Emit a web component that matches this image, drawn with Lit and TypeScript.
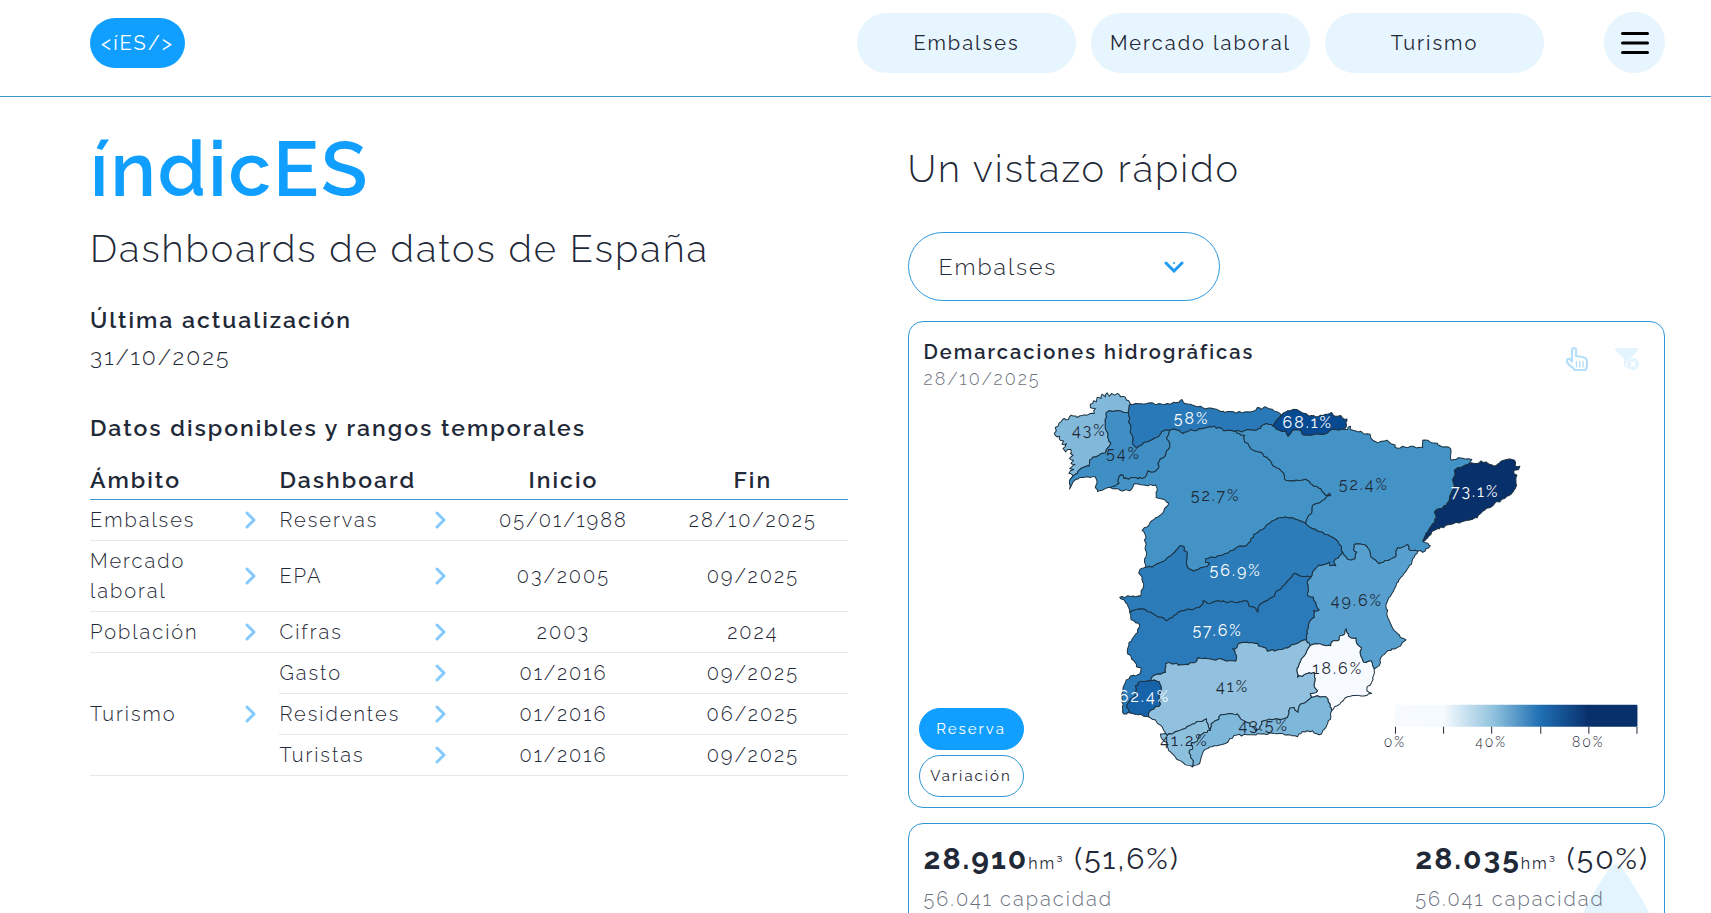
import { LitElement, html, svg, css } from "lit";
import { customElement, property, state } from "lit/decorators.js";

type Point = [number, number];

/** Converts a survey sheet (origin plus points at triple scale) to chart units. */
const sheet = (ox: number, oy: number, text: string): Point[] =>
  text
    .trim()
    .split(/\s+/)
    .map((pair) => {
      const [x, y] = pair.split(",").map(Number);
      return [ox + x / 3, oy + y / 3] as Point;
    });

const nw = (t: string) => sheet(121, 48, t);
const ne = (t: string) => sheet(361, 48, t);
const sw = (t: string) => sheet(181, 228, t);
const se = (t: string) => sheet(361, 208, t);

/** Adds small, repeatable irregularities so borders read as terrain. */
const roughen = (points: Point[], seed: number): Point[] => {
  let s = seed;
  const next = () => {
    s = (s * 16807) % 2147483647;
    return s / 2147483647 - 0.5;
  };
  const out: Point[] = [points[0]];
  for (let i = 1; i < points.length; i++) {
    const [ax, ay] = points[i - 1];
    const [bx, by] = points[i];
    const steps = Math.max(1, Math.round(Math.hypot(bx - ax, by - ay) / 2.5));
    for (let k = 1; k < steps; k++) {
      const f = k / steps;
      out.push([ax + (bx - ax) * f + next() * 2, ay + (by - ay) * f + next() * 2]);
    }
    out.push(points[i]);
  }
  return out;
};

const rawArcs: Record<string, Point[]> = {
  galCoast: nw(
    "270,72 265,62 255,52 240,50 232,40 222,45 214,40 207,48 200,38 195,50 185,42 182,55 170,52 168,65 160,62 150,72 150,82 165,85 160,92 162,100 150,100 140,105 125,106 110,112 92,105 85,118 72,115 62,125 55,135 45,142 48,152 42,160 50,170 58,168 60,180 70,182 65,192 78,190 68,205 76,215 82,208 92,208 90,220 98,225 88,235 100,240 92,250 104,252 88,265 100,268 86,280 98,285 88,300",
  ),
  galMino: nw(
    "88,300 105,282 118,268 132,260 146,258 148,240 158,230 175,226 195,218 198,208 212,190 204,175 203,160 195,145 195,130 198,112 197,98 205,92 220,94 240,92 250,97 264,98",
  ),
  galCant: nw("264,98 266,85 270,72"),
  minoCant: nw(
    "264,98 268,112 264,125 272,140 272,160 278,175 276,190 285,200 298,195 315,185 335,178 355,168 362,155 372,150 388,150",
  ),
  minoDuero: nw(
    "388,150 384,165 378,175 388,190 388,200 378,212 375,225 358,238 352,250 355,262 340,275 322,272 318,285 305,295 285,292 265,297 250,294 248,285 240,284 234,295 236,308 222,318 210,322",
  ),
  minoPort: nw(
    "210,322 195,325 185,330 172,334 165,322 170,308 165,290 150,292 135,290 118,292 105,298 95,312 88,326 88,300",
  ),
  cantCoast: nw(
    "270,72 285,70 310,72 330,68 350,72 380,70 405,68 415,66 424,58 432,70 450,72 465,78 480,78 495,86 520,86 540,94 570,94 590,97 620,95 645,90 650,82 660,88 672,80 685,86 700,92 712,96 722,105",
  ),
  cantVasco: nw("722,105 710,118 702,128 697,138"),
  cantEbro: nw("697,138 680,130 668,134 660,145 640,150 620,148 605,155 585,153"),
  cantDuero: nw(
    "585,153 570,150 550,152 535,142 515,140 495,143 475,145 465,152 450,148 435,155 428,160 415,150 403,147 388,150",
  ),
  vascoCoast: ne(
    "2,105 8,98 20,92 45,88 60,95 75,100 85,108 105,110 125,106 140,102 152,97 158,106 170,108 180,106 185,114 198,116 194,128 196,140 190,148",
  ),
  vascoEbro: ne(
    "190,148 165,148 145,152 130,162 110,160 90,165 65,162 60,150 50,148 35,150 30,158 22,168 15,152 0,152 -12,148 -23,138",
  ),
  pyrenees: ne(
    "190,148 200,148 202,140 209,138 208,148 225,152 245,158 268,162 272,176 290,188 305,182 318,180 335,192 350,204 365,198 375,202 390,198 405,203 425,202 425,180 440,180 460,188 480,198 502,200 510,215 510,240 525,238 540,233 555,236 572,238 565,250",
  ),
  ebroCat: ne(
    "565,250 550,256 535,262 520,270 522,285 515,298 520,315 512,335 505,360 495,375 475,385 460,395 466,412 455,430 445,445 435,460 425,482",
  ),
  catCoast: ne(
    "565,250 580,250 600,242 620,250 640,258 655,248 668,240 685,236 700,240 702,258 716,258 712,268 698,270 698,280 707,285 706,315 695,335 670,355 640,370 610,390 600,398 588,412 550,422 510,432 475,445 460,450 445,465 430,482 425,482",
  ),
  ebroCoast: ne("425,482 440,488 448,496 435,505 425,516 418,510 410,512"),
  ebroJucar: ne(
    "410,512 398,510 388,510 380,492 365,500 350,502 345,518 342,530 322,540 295,550 285,540 270,530 262,505 250,492 220,492 218,508 228,515 222,535 205,538 190,525 185,515",
  ),
  ebroTajo: ne("185,515 178,495 165,478 140,462 110,452 90,442 75,430"),
  ebroDuero: ne(
    "75,430 80,412 92,400 95,375 115,368 130,358 138,348 150,346 146,338 135,345 120,325 100,318 80,300 60,300 40,302 15,300 10,280 0,270 -5,265 -20,258 -32,240 -40,232 -50,228 -60,215 -75,212 -90,205 -98,190 -108,185 -108,165 -125,160 -135,153",
  ),
  dueroTajo: nw(
    "795,430 770,418 750,412 720,412 700,420 680,432 665,448 645,460 630,482 610,498 590,500 565,515 540,525 515,530 495,535 495,545 507,548 500,558 480,562 458,572 440,560 438,540 440,515 430,510 430,498 420,496 412,505 395,522 375,538 350,550 335,560 315,560",
  ),
  dueroPort: nw(
    "210,322 225,325 245,332 272,328 280,312 310,314 345,314 350,330 347,352 365,356 384,368 372,385 365,400 335,420 325,435 305,450 315,465 314,500 318,520 312,545 315,560",
  ),
  tajoPort: sw("135,20 118,28 115,38 125,50 130,70 122,90 120,108 90,108 58,110 80,130 88,155"),
  tajoGuad: sw(
    "88,155 105,148 125,145 155,158 175,170 200,180 220,165 245,150 280,145 300,138 308,120 320,128 345,122 400,125 440,122 445,138 460,140 472,155 475,135 500,120 520,108 525,95 545,78 560,62 582,38 605,48 632,48",
  ),
  tajoJucar: se("92,108 95,95 110,78 130,72 145,65 147,76 165,76 158,64 175,48 185,35"),
  guadJucar: se("92,108 80,120 82,145 80,165 98,170 105,190 115,208 98,210 100,230 85,245 78,270 76,298"),
  guadGuadq: sw(
    "616,238 600,242 585,250 560,262 530,268 500,272 495,262 480,258 470,248 440,245 412,250 408,262 396,265 408,285 405,302 370,298 330,295 290,292 285,305 250,312 220,310 205,305 195,310 195,335 175,340 155,348 152,360",
  ),
  guadPort: sw(
    "88,155 92,178 118,192 112,215 95,235 85,255 82,280 100,300 108,318 122,322 118,340 90,346 75,365 65,395 65,425 70,460 90,457",
  ),
  guadTinto: sw("90,457 85,450 78,440 90,415 108,398 105,375 120,362 152,360"),
  tintoGuadq: sw("152,360 175,362 182,385 175,410 180,430 160,445 145,455 145,468"),
  tintoCoast: sw("90,457 115,462 145,468"),
  guadqCoast: sw("145,468 165,478 185,498 192,512 200,525"),
  guadqLete: sw("200,525 225,512 250,505 275,490 300,482 318,475 322,490 330,508"),
  leteCoast: sw("200,525 195,518 180,520 185,535 200,545 205,570 225,590 240,600 255,612 275,618"),
  leteMed: sw("330,508 310,515 295,525 290,540 272,545 275,565 265,575 270,590 278,600 275,618"),
  guadqMed: sw(
    "330,508 332,488 350,478 360,462 385,458 410,460 420,475 440,485 455,498 465,510 478,505 482,482 500,478 530,475 560,470 568,442 580,440 592,455 600,430 620,420 632,410",
  ),
  medSegura: sw("632,410 650,405 675,408 688,430 692,450"),
  medCoast: sw(
    "275,618 290,612 300,598 305,580 315,565 350,555 380,545 400,524 440,522 480,520 520,518 560,522 590,528 605,512 635,510 655,522 675,500 690,465 692,450",
  ),
  guadqSegura: sw(
    "616,238 628,255 618,270 608,288 595,310 588,330 590,350 615,340 640,335 643,355 640,370 650,390 628,398 632,410",
  ),
  seguraJucar: se(
    "76,298 85,315 110,310 150,315 155,302 175,298 178,285 192,280 196,265 202,280 210,292 225,292 228,310 242,322 238,340 248,365 270,360 275,375 280,385",
  ),
  seguraCoast: se(
    "280,385 278,405 272,425 258,440 258,450 272,458 250,466 225,464 200,468 180,485 152,510",
  ),
  jucarCoast: se(
    "410,32 400,50 385,75 360,110 340,145 320,180 316,205 325,240 340,270 358,290 375,298 350,320 320,330 300,350 295,375 280,385",
  ),
};

const arcs: Record<string, Point[]> = Object.fromEntries(
  Object.entries(rawArcs).map(([name, pts], i) => [name, roughen(pts, 7919 * (i + 3))]),
);

/** Joins arcs into one closed path; a leading "-" walks an arc backwards. */
const ring = (names: string): string => {
  const pts = names
    .split(" ")
    .flatMap((n) => (n.startsWith("-") ? [...arcs[n.slice(1)]].reverse() : arcs[n]));
  return "M" + pts.map(([x, y]) => `${x.toFixed(1)} ${y.toFixed(1)}`).join("L") + "Z";
};

interface Basin {
  name: string;
  value: string;
  fill: string;
  path: string;
  x: number;
  y: number;
  light?: boolean;
}

const basins: Basin[] = [
  { name: "Galicia Costa", value: "43%", fill: "#82b9db", x: 170, y: 104, path: ring("galCoast galMino galCant") },
  { name: "Miño-Sil", value: "54%", fill: "#3f8fc5", x: 204, y: 127, path: ring("galMino minoCant minoDuero minoPort") },
  { name: "Cantábrico", value: "58%", fill: "#2979b9", x: 272, y: 92, light: true, path: ring("cantCoast cantVasco cantEbro cantDuero -minoCant galCant") },
  { name: "Duero", value: "52.7%", fill: "#4493c7", x: 296, y: 169, path: ring("-cantDuero -ebroDuero dueroTajo -dueroPort -minoDuero") },
  { name: "Ebro", value: "52.4%", fill: "#4493c7", x: 444, y: 158, path: ring("pyrenees ebroCat ebroCoast ebroJucar ebroTajo ebroDuero -cantEbro -vascoEbro") },
  { name: "País Vasco", value: "68.1%", fill: "#084a91", x: 388, y: 96, light: true, path: ring("vascoCoast vascoEbro -cantVasco") },
  { name: "Cataluña", value: "73.1%", fill: "#08306b", x: 555, y: 165, light: true, path: ring("catCoast -ebroCat") },
  { name: "Tajo", value: "56.9%", fill: "#2c7cba", x: 316, y: 244, light: true, path: ring("dueroTajo tajoPort tajoGuad tajoJucar ebroTajo") },
  { name: "Júcar", value: "49.6%", fill: "#569fce", x: 437, y: 273, path: ring("jucarCoast -seguraJucar -guadJucar tajoJucar -ebroJucar") },
  { name: "Guadiana", value: "57.6%", fill: "#2a7ab9", x: 298, y: 303, light: true, path: ring("tajoGuad guadJucar guadGuadq -guadTinto -guadPort") },
  { name: "Segura", value: "18.6%", fill: "#f7fbff", x: 418, y: 341, path: ring("seguraJucar seguraCoast -medSegura -guadqSegura") },
  { name: "Guadalquivir", value: "41%", fill: "#91c1de", x: 313, y: 359, path: ring("guadqSegura -guadqMed -guadqLete -guadqCoast -tintoGuadq -guadGuadq") },
  { name: "Tinto, Odiel y Piedras", value: "62.4%", fill: "#1663aa", x: 225, y: 369, light: true, path: ring("guadTinto tintoGuadq -tintoCoast") },
  { name: "Cuencas Mediterráneas", value: "43.5%", fill: "#7db7da", x: 344, y: 398, path: ring("guadqMed medSegura -medCoast -leteMed") },
  { name: "Guadalete-Barbate", value: "41.2%", fill: "#8cc0dd", x: 265, y: 413, path: ring("guadqLete leteMed -leteCoast") },
];

const ticks = [
  { x: 475, label: "0%" },
  { x: 523, label: "" },
  { x: 571, label: "40%" },
  { x: 620, label: "" },
  { x: 668, label: "80%" },
  { x: 716, label: "" },
];

@customElement("basin-map")
export class BasinMap extends LitElement {
  static styles = css`
    :host {
      display: block;
    }
    .map {
      display: block;
      width: 100%;
      height: auto;
    }
    .basin {
      stroke: #1c3240;
      stroke-width: 1;
      stroke-linejoin: round;
    }
    .label {
      font-size: 16px;
      font-weight: 400;
      letter-spacing: 2px;
      text-anchor: middle;
      fill: #1f2937;
    }
    .light {
      fill: #ffffff;
    }
    .tick {
      stroke: #1f2937;
      stroke-width: 1;
    }
    .scale {
      font-size: 14px;
      letter-spacing: 2px;
      text-anchor: middle;
      fill: #1f2937;
    }
  `;

  render() {
    return html`<svg class="map" viewBox="0 0 734 464" role="img" aria-label="Mapa de demarcaciones hidrográficas">
      <defs>
        <linearGradient id="ramp">
          <stop offset="0" stop-color="#f7fbff"></stop>
          <stop offset="0.2" stop-color="#f5faff"></stop>
          <stop offset="0.4" stop-color="#94c4df"></stop>
          <stop offset="0.6" stop-color="#1f6fb3"></stop>
          <stop offset="0.8" stop-color="#08306b"></stop>
          <stop offset="1" stop-color="#08306b"></stop>
        </linearGradient>
      </defs>
      ${basins.map((b) => svg`<path class="basin" d=${b.path} fill=${b.fill}></path>`)}
      ${basins.map(
        (b) => svg`<text class=${b.light ? "label light" : "label"} x=${b.x} y=${b.y}>${b.value}</text>`,
      )}
      <rect x="475" y="372" width="242" height="22" rx="1" fill="url(#ramp)"></rect>
      ${ticks.map(
        (t) => svg`<path class="tick" d="M${t.x + 0.5} 394v7"></path>
          <text class="scale" x=${t.x} y="414">${t.label}</text>`,
      )}
    </svg>`;
  }
}

interface Board {
  name: string;
  from: string;
  to: string;
}

const areas: { name: string; boards: Board[] }[] = [
  { name: "Embalses", boards: [{ name: "Reservas", from: "05/01/1988", to: "28/10/2025" }] },
  { name: "Mercado laboral", boards: [{ name: "EPA", from: "03/2005", to: "09/2025" }] },
  { name: "Población", boards: [{ name: "Cifras", from: "2003", to: "2024" }] },
  {
    name: "Turismo",
    boards: [
      { name: "Gasto", from: "01/2016", to: "09/2025" },
      { name: "Residentes", from: "01/2016", to: "06/2025" },
      { name: "Turistas", from: "01/2016", to: "09/2025" },
    ],
  },
];

@customElement("range-table")
export class RangeTable extends LitElement {
  static styles = css`
    :host {
      display: block;
    }
    .table {
      width: 100%;
      table-layout: fixed;
      border-collapse: collapse;
      font-size: 20px;
      line-height: 30px;
    }
    .table th {
      padding: 0 0 4px;
      text-align: left;
      font-size: 23px;
      font-weight: 600;
      border-bottom: 1px solid #3d96cc;
    }
    .table td {
      padding: 5px 0;
      border-bottom: 1px solid #e5e7eb;
    }
    .table .num {
      text-align: center;
    }
    .link {
      display: flex;
      align-items: center;
      justify-content: space-between;
      padding-right: 22px;
      color: inherit;
      text-decoration: none;
    }
    .name {
      max-width: 125px;
    }
    .chevron {
      flex: none;
      width: 12px;
      height: 18px;
      fill: none;
      stroke: #85caff;
      stroke-width: 3;
      stroke-linecap: round;
      stroke-linejoin: round;
    }
  `;

  private link(name: string) {
    return html`<a class="link" href="#">
      <span class="name">${name}</span>
      <svg class="chevron" viewBox="0 0 12 18" aria-hidden="true"><path d="M2 2l7 7-7 7"></path></svg>
    </a>`;
  }

  render() {
    return html`<table class="table">
      <thead>
        <tr>
          <th scope="col">Ámbito</th>
          <th scope="col">Dashboard</th>
          <th scope="col" class="num">Inicio</th>
          <th scope="col" class="num">Fin</th>
        </tr>
      </thead>
      <tbody>
        ${areas.map((area) =>
          area.boards.map(
            (board, i) => html`<tr>
              ${i === 0 ? html`<td rowspan=${area.boards.length}>${this.link(area.name)}</td>` : null}
              <td>${this.link(board.name)}</td>
              <td class="num">${board.from}</td>
              <td class="num">${board.to}</td>
            </tr>`,
          ),
        )}
      </tbody>
    </table>`;
  }
}

@customElement("stat-block")
export class StatBlock extends LitElement {
  @property() amount = "";
  @property() share = "";
  @property() capacity = "";

  static styles = css`
    :host {
      display: block;
    }
    .value {
      margin: 0;
      font-size: 30px;
      line-height: 42px;
      font-weight: 400;
      white-space: nowrap;
    }
    .amount {
      font-weight: 700;
    }
    .unit {
      font-size: 16px;
    }
    .capacity {
      margin: 0;
      font-size: 20px;
      line-height: 28px;
      color: #6b7280;
    }
  `;

  render() {
    return html`<p class="value">
        <span class="amount">${this.amount}</span><span class="unit">hm³</span> (${this.share})
      </p>
      <p class="capacity">${this.capacity} capacidad</p>`;
  }
}

@customElement("app-root")
export class AppRoot extends LitElement {
  @state() private mode: "Reserva" | "Variación" = "Reserva";

  static styles = css`
    :host {
      display: block;
      height: 100vh;
      overflow-y: auto;
      scrollbar-width: none;
      background: #ffffff;
      color: #1f2937;
      font-family: Raleway, Lato, sans-serif;
      font-weight: 300;
      letter-spacing: 2px;
    }
    * {
      box-sizing: border-box;
    }
    button,
    select {
      font: inherit;
      letter-spacing: inherit;
      color: inherit;
      cursor: pointer;
    }
    .header {
      display: flex;
      align-items: center;
      justify-content: space-between;
      padding: 12px 46px 23px 90px;
      border-bottom: 1px solid #3d96cc;
    }
    .logo {
      display: grid;
      place-items: center;
      width: 95px;
      height: 50px;
      border-radius: 25px;
      background: #119fff;
      color: #ffffff;
      font-size: 20px;
      font-weight: 400;
      text-decoration: none;
    }
    .nav {
      display: flex;
      align-items: center;
      gap: 15px;
    }
    .pill {
      display: grid;
      place-items: center;
      width: 219px;
      height: 60px;
      border-radius: 30px;
      background: #e7f5fe;
      color: inherit;
      font-size: 20px;
      font-weight: 400;
      text-decoration: none;
    }
    .menu {
      display: grid;
      place-items: center;
      width: 61px;
      height: 61px;
      margin-left: 45px;
      padding: 0;
      border: 0;
      border-radius: 50%;
      background: #e7f5fe;
    }
    .bars {
      width: 30px;
      height: 24px;
      stroke: #000000;
      stroke-width: 3;
      stroke-linecap: round;
    }
    .main {
      display: grid;
      grid-template-columns: 1fr 1fr;
      gap: 60px;
      padding: 29px 46px 40px 90px;
    }
    .title {
      margin: 0;
      font-size: 76px;
      line-height: 88px;
      font-weight: 600;
      color: #119fff;
    }
    .subtitle {
      margin: 0;
      font-size: 38px;
      line-height: 50px;
      font-weight: 300;
    }
    .intro .subtitle {
      margin-top: 10px;
    }
    .heading {
      margin: 0;
      font-size: 23px;
      line-height: 32px;
      font-weight: 600;
    }
    .updated {
      margin: 30px 0 0;
    }
    .date {
      margin: 5px 0 39px;
      font-size: 23px;
      line-height: 32px;
    }
    .ranges {
      margin-top: 21px;
    }
    .glance {
      display: flex;
      flex-direction: column;
      padding-top: 18px;
    }
    .picker {
      display: grid;
      align-items: center;
      width: 312px;
      margin: 38px 0 20px;
    }
    .select {
      grid-area: 1 / 1;
      height: 69px;
      padding: 0 30px;
      border: 1px solid #2b99e0;
      border-radius: 35px;
      background: transparent;
      appearance: none;
      font-size: 23px;
    }
    .caret {
      grid-area: 1 / 1;
      justify-self: end;
      width: 20px;
      height: 12px;
      margin-right: 36px;
      fill: none;
      stroke: #1d9bf0;
      stroke-width: 3;
      stroke-linecap: round;
      pointer-events: none;
    }
    .card {
      border: 1px solid #2f97d4;
      border-radius: 15px;
    }
    .chart {
      display: grid;
      padding: 10px;
    }
    .chart > * {
      grid-area: 1 / 1;
    }
    .caption {
      display: flex;
      justify-content: space-between;
      align-self: start;
      padding: 4px 14px 0 5px;
    }
    .name {
      margin: 0;
      font-size: 20px;
      line-height: 32px;
      font-weight: 600;
    }
    .day {
      margin: 0;
      font-size: 18px;
      line-height: 22px;
      color: #6b7280;
    }
    .icons {
      display: flex;
      gap: 24px;
      padding-top: 10px;
    }
    .icon {
      width: 26px;
      height: 26px;
    }
    .modes {
      display: flex;
      flex-direction: column;
      gap: 5px;
      align-self: end;
      justify-self: start;
    }
    .mode {
      width: 105px;
      height: 42px;
      padding: 0;
      border: 1px solid #2f97d4;
      border-radius: 21px;
      background: transparent;
      font-size: 15px;
      font-weight: 400;
    }
    .mode[aria-pressed="true"] {
      border-color: #119fff;
      background: #119fff;
      color: #ffffff;
    }
    .stats {
      position: relative;
      display: flex;
      justify-content: space-between;
      min-height: 200px;
      margin-top: 15px;
      padding: 14px 15px;
      overflow: hidden;
    }
    .drop {
      position: absolute;
      right: 10px;
      top: 40px;
      width: 76px;
      height: 110px;
      fill: #e4f4fe;
    }
    .stat {
      position: relative;
    }
  `;

  render() {
    return html`
      <header class="header">
        <a class="logo" href="#">&lt;íES/&gt;</a>
        <nav class="nav">
          <a class="pill" href="#">Embalses</a>
          <a class="pill" href="#">Mercado laboral</a>
          <a class="pill" href="#">Turismo</a>
          <button class="menu" aria-label="Menú">
            <svg class="bars" viewBox="0 0 30 24" aria-hidden="true">
              <path d="M2.500 2.500h25M2.500 12h25M2.500 21.500h25"></path>
            </svg>
          </button>
        </nav>
      </header>
      <main class="main">
        <section class="intro">
          <h1 class="title">índicES</h1>
          <h2 class="subtitle">Dashboards de datos de España</h2>
          <h3 class="heading updated">Última actualización</h3>
          <p class="date">31/10/2025</p>
          <h3 class="heading">Datos disponibles y rangos temporales</h3>
          <range-table class="ranges"></range-table>
        </section>
        <section class="glance">
          <h2 class="subtitle">Un vistazo rápido</h2>
          <div class="picker">
            <select class="select" aria-label="Dashboard">
              <option>Embalses</option>
              <option>Mercado laboral</option>
              <option>Turismo</option>
            </select>
            <svg class="caret" viewBox="0 0 20 12" aria-hidden="true">
              <path d="M2 2l8 8 8-8"></path>
              <circle cx="10" cy="2" r="1" fill="#1d9bf0" stroke="none"></circle>
            </svg>
          </div>
          <article class="card chart">
            <basin-map></basin-map>
            <div class="caption">
              <div>
                <h3 class="name">Demarcaciones hidrográficas</h3>
                <p class="day">28/10/2025</p>
              </div>
              <div class="icons">
                <svg class="icon" viewBox="0 0 26 26" fill="none" stroke="#b5dff8" stroke-width="2.2" stroke-linejoin="round" stroke-linecap="round" aria-hidden="true">
                  <path d="M8 15.500V4a2 2 0 0 1 4 0v6l3.500.5 3.500.8 2.500.9q1.500.8 1.500 2.800v4q0 3-1.500 5h-11q-1-2-4-4-3.500-2.500-3.500-5 0-2.500 2.500-2.200z"></path>
                  <path d="M12.500 15.500v5.500M15.700 15.500v5.500M19 15.500v5.500" stroke-width="1.400"></path>
                </svg>
                <svg class="icon" viewBox="0 0 26 26" fill="#e4f4fe" aria-hidden="true">
                  <path d="M1 2h23v2l-8 9v11l-6-4v-7L1 4z"></path>
                  <circle cx="19" cy="18" r="6.500" stroke="#ffffff" stroke-width="1"></circle>
                  <path d="M16.700 15.700l4.600 4.600M21.300 15.700l-4.600 4.600" stroke="#ffffff" stroke-width="1.800"></path>
                </svg>
              </div>
            </div>
            <div class="modes">
              ${(["Reserva", "Variación"] as const).map(
                (m) => html`<button
                  class="mode"
                  aria-pressed=${this.mode === m ? "true" : "false"}
                  @click=${() => (this.mode = m)}
                >
                  ${m}
                </button>`,
              )}
            </div>
          </article>
          <article class="card stats">
            <svg class="drop" viewBox="0 0 76 110" aria-hidden="true">
              <path d="M38 0C32 0 22 20 12 35 4 50 0 60 0 72a38 38 0 0 0 76 0C76 60 72 50 64 35 54 20 44 0 38 0z"></path>
            </svg>
            <stat-block class="stat" amount="28.910" share="51,6%" capacity="56.041"></stat-block>
            <stat-block class="stat" amount="28.035" share="50%" capacity="56.041"></stat-block>
          </article>
        </section>
      </main>
    `;
  }
}
